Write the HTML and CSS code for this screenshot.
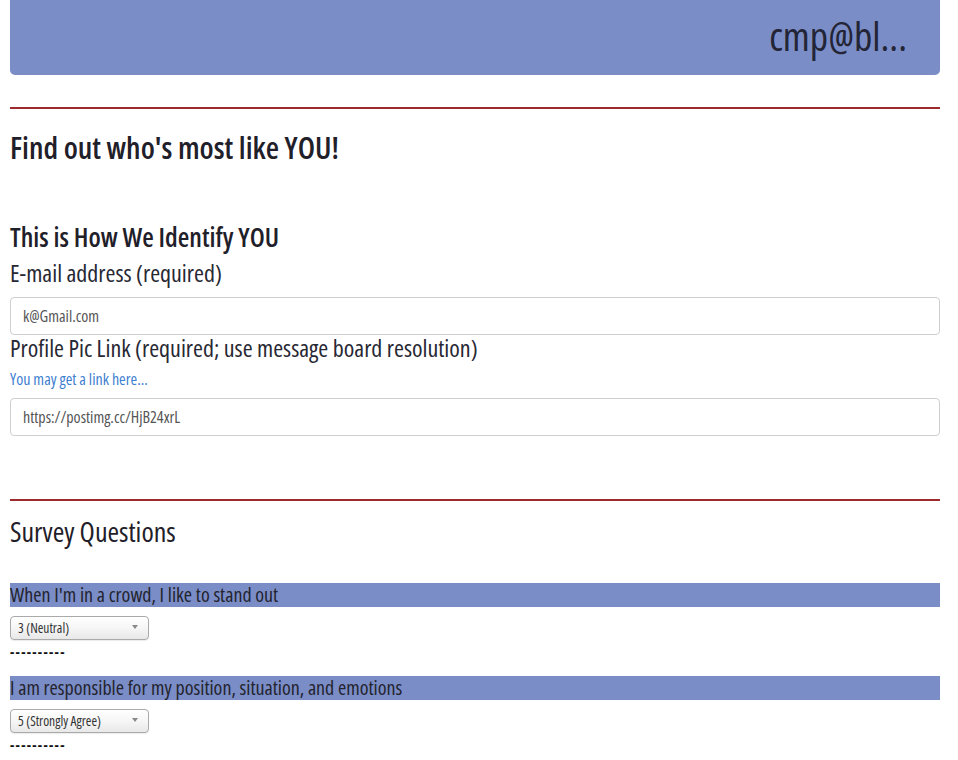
FILE: index.html
```html
<!DOCTYPE html>
<html>
<head>
<meta charset="utf-8">
<title>Survey</title>
<link rel="stylesheet" href="styles.css">
</head>
<body>
<div class="page">
  <header class="topbar"><span class="user">cmp@bl...</span></header>
  <div class="rule rule-top"></div>
  <h1 class="title">Find out who's most like YOU!</h1>
  <h2 class="subtitle">This is How We Identify YOU</h2>
  <label class="field-label" for="email">E-mail address (required)</label>
  <input class="text-input input-email" id="email" type="text" value="k@Gmail.com">
  <label class="field-label label-pic" for="pic">Profile Pic Link (required; use message board resolution)</label>
  <a class="help-link" href="#">You may get a link here...</a>
  <input class="text-input input-pic" id="pic" type="text" value="https://postimg.cc/HjB24xrL">
  <div class="rule rule-survey"></div>
  <h2 class="section-title">Survey Questions</h2>

  <div class="question first">
    <div class="q-text">When I'm in a crowd, I like to stand out</div>
    <span class="select-wrap"><select class="q-select"><option>1 (Strongly Disagree)</option><option>2 (Disagree)</option><option selected>3 (Neutral)</option><option>4 (Agree)</option><option>5 (Strongly Agree)</option></select></span>
    <div class="dashes">----------</div>
  </div>

  <div class="question">
    <div class="q-text">I am responsible for my position, situation, and emotions</div>
    <span class="select-wrap"><select class="q-select"><option>1 (Strongly Disagree)</option><option>2 (Disagree)</option><option>3 (Neutral)</option><option>4 (Agree)</option><option selected>5 (Strongly Agree)</option></select></span>
    <div class="dashes">----------</div>
  </div>
</div>
</body>
</html>
```
FILE: styles.css
```css
html, body {
  margin: 0;
  padding: 0;
  background: #ffffff;
}
body {
  font-family: "Open Sans", "DejaVu Sans Condensed", sans-serif;
  font-stretch: 75%;
  color: #22232d;
}
.page {
  padding: 0 18px 0 10px;
  display: flex;
  flex-direction: column;
  align-items: stretch;
}
.topbar {
  height: 75px;
  background: #7b8dc7;
  border-radius: 0 0 5px 5px;
  display: flex;
  justify-content: flex-end;
  align-items: center;
  padding-right: 33px;
  box-sizing: border-box;
}
.user {
  font-size: 40px;
  line-height: 48px;
  color: #232536;
  margin-top: -4px;
}
.rule {
  height: 0;
  border-top: 2px solid #9d2b2d;
}
.rule-top {
  margin-top: 32px;
}
.title {
  margin: 20px 0 0;
  font-size: 30.5px;
  line-height: 36px;
  font-weight: 600;
  color: #1f2029;
}
.subtitle {
  margin: 57px 0 0;
  font-size: 26.5px;
  line-height: 30px;
  font-weight: 600;
  color: #1f2029;
}
.field-label {
  display: block;
  margin-top: 8px;
  font-size: 24px;
  line-height: 26px;
  color: #272833;
}
.text-input {
  display: block;
  box-sizing: border-box;
  height: 38px;
  margin: 11px 0 0;
  padding: 0 12px;
  border: 1px solid #cfcfcf;
  border-radius: 4px;
  font-family: inherit;
  font-stretch: 75%;
  font-size: 16px;
  color: #555555;
  background: #fff;
}
.label-pic {
  margin-top: 0;
}
.help-link {
  display: block;
  margin-top: 8px;
  font-size: 16px;
  line-height: 20px;
  color: #3f7fd0;
  text-decoration: none;
}
.input-pic {
  margin-top: 9px;
}
.rule-survey {
  margin-top: 63px;
}
.section-title {
  margin: 14px 0 0;
  font-size: 28px;
  line-height: 32px;
  font-weight: normal;
  color: #1f2029;
}
.question {
  display: flex;
  flex-direction: column;
  align-items: flex-start;
  margin-top: 14px;
}
.question.first {
  margin-top: 36px;
}
.q-text {
  align-self: stretch;
  background: #7b8dc7;
  font-size: 20px;
  line-height: 23px;
  height: 24px;
  color: #23242e;
  white-space: nowrap;
}
.select-wrap {
  position: relative;
  display: flex;
  margin-top: 9px;
}
.q-select {
  -webkit-appearance: none;
  appearance: none;
  width: 139px;
  height: 24px;
  box-sizing: border-box;
  padding: 0 0 0 7px;
  border: 1px solid #aaaaaa;
  border-radius: 4px;
  background: linear-gradient(#ffffff 0%, #f6f6f6 50%, #e8e8e8 100%);
  font-family: inherit;
  font-stretch: 75%;
  font-size: 13.5px;
  color: #333;
  box-shadow: 0 1px 1px rgba(0,0,0,0.08);
}
.select-wrap::after {
  content: "";
  position: absolute;
  left: 122px;
  top: 9px;
  border-left: 3px solid transparent;
  border-right: 3px solid transparent;
  border-top: 4px solid #888;
  pointer-events: none;
}
.dashes {
  font-size: 14px;
  line-height: 20px;
  font-weight: bold;
  letter-spacing: 1.3px;
  color: #111;
  margin-top: 2px;
}
```
